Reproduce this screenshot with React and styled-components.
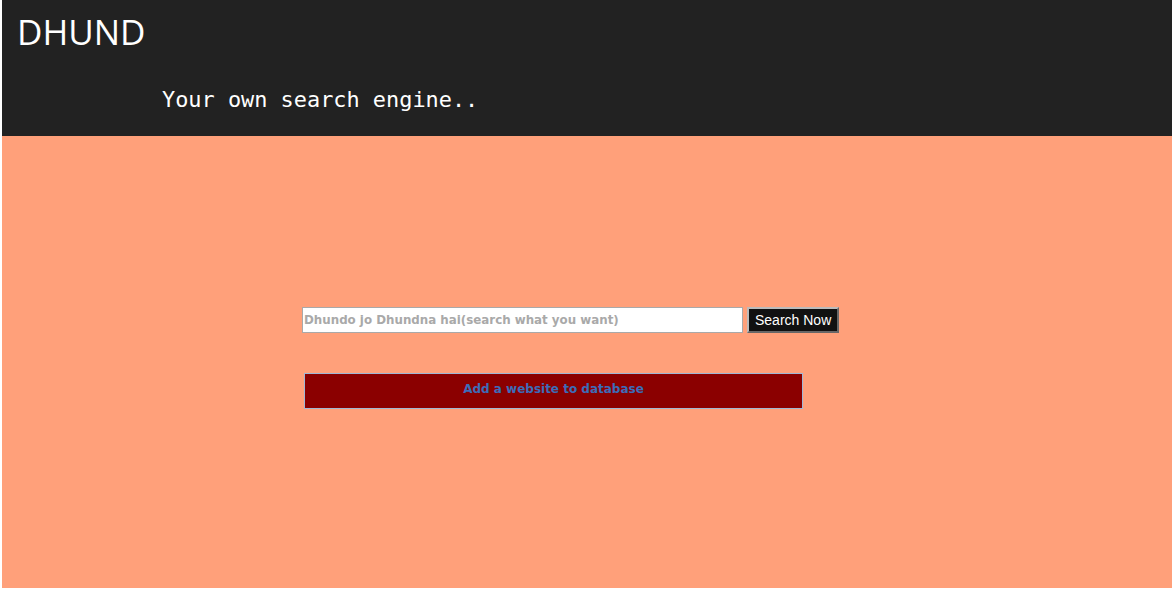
import React from "react";
import styled, { createGlobalStyle } from "styled-components";

// Page reset: the original page keeps a thin margin on the sides
const GlobalStyle = createGlobalStyle`
	body {
		margin: 0 2px;
		background: #ffffff;
	}
`;

// Dark header band with the brand and tagline
const Header = styled.header`
	background-color: #222222;
	height: 136px;
	padding: 12px 15px 0;
	box-sizing: border-box;
	display: flex;
	flex-direction: column;
`;

const Brand = styled.h1`
	margin: 0;
	font-family: "Open Sans", "Liberation Sans", sans-serif;
	font-weight: 400;
	font-size: 35px;
	line-height: 40px;
	color: #ffffff;
`;

const Tagline = styled.p`
	margin: 34px 0 0 145px;
	font-family: "DejaVu Sans Mono", "Liberation Mono", monospace;
	font-size: 21.9px;
	line-height: 28px;
	color: #ffffff;
`;

// Salmon body area holding the search form
const Main = styled.main`
	background-color: #ffa07a;
	height: 452px;
	padding: 171px 0 0 300px;
	box-sizing: border-box;
	display: flex;
	flex-direction: column;
	gap: 40px;
`;

const SearchRow = styled.form`
	display: flex;
	align-items: center;
	gap: 4px;
`;

const SearchInput = styled.input`
	width: 441px;
	height: 26px;
	box-sizing: border-box;
	border: 1px solid #a9a9a9;
	padding: 0 1px;
	font-family: "Comic Sans MS", "DejaVu Sans", sans-serif;
	font-weight: bold;
	font-size: 11.85px;
	background: #ffffff;

	&::placeholder {
		color: #a9a9a9;
	}
`;

const SearchButton = styled.button`
	height: 26px;
	padding: 0 6px;
	background-color: #111111;
	color: #ffffff;
	border: 2px outset #bbbbbb;
	font-family: "Liberation Sans", Arial, sans-serif;
	font-size: 14px;
	cursor: pointer;
`;

const AddBar = styled.a`
	display: flex;
	align-items: center;
	justify-content: center;
	margin-left: 2px;
	width: 499px;
	height: 36px;
	padding-bottom: 4px;
	box-sizing: border-box;
	background-color: #8b0000;
	border: 1px solid #9fb8d6;
	color: #3c6cb8;
	font-family: "DejaVu Sans", Verdana, sans-serif;
	font-weight: bold;
	font-size: 12px;
	text-decoration: none;
`;

export default function App() {
	return (
		<>
			<GlobalStyle />
			<Header>
				<Brand>DHUND</Brand>
				<Tagline>Your own search engine..</Tagline>
			</Header>
			<Main>
				<SearchRow onSubmit={e => e.preventDefault()}>
					<SearchInput
						type="text"
						placeholder="Dhundo jo Dhundna hai(search what you want)"
					/>
					<SearchButton type="submit">Search Now</SearchButton>
				</SearchRow>
				<AddBar href="#">Add a website to database</AddBar>
			</Main>
		</>
	);
}
